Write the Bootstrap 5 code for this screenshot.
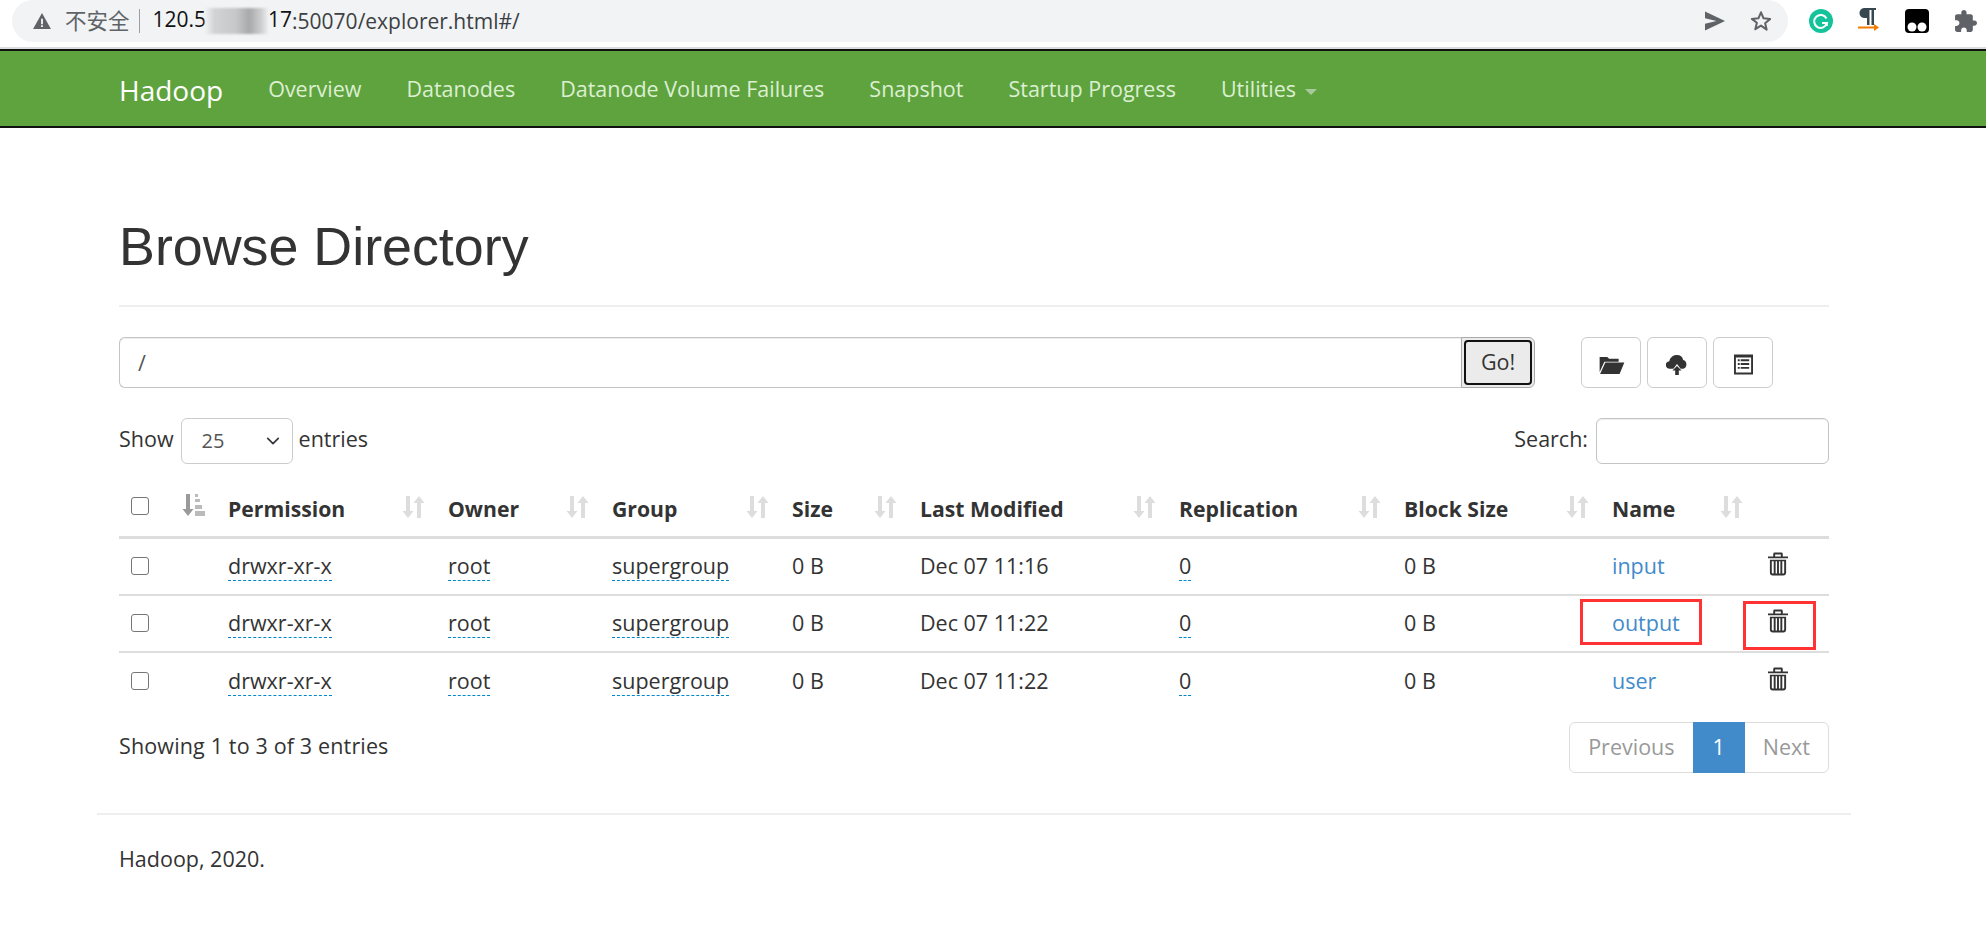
<!DOCTYPE html>
<html lang="zh-CN">
<head>
<meta charset="utf-8">
<title>Browsing HDFS</title>
<link rel="stylesheet" href="https://cdn.jsdelivr.net/npm/bootstrap@5.3.0/dist/css/bootstrap.min.css">
<style>
:root{--hd-blue:#428bca;--hd-border:#ccc;}
html,body{height:100%;}
body{font-family:"Open Sans","Noto Sans",sans-serif;font-size:21.5px;color:#333;background:#fff;overflow:hidden;}
.chrome-bar{height:49px;background:#fff;padding-left:12px;padding-right:9px;}
.omni{height:42px;width:1776px;flex-shrink:0;background:#f1f3f4;border-radius:21px;padding:0 16px 0 21px;font-size:21px;line-height:1;}
.omni-warn{color:#5f6368;font-family:"Noto Sans CJK SC",sans-serif;font-size:21.5px;padding-bottom:2px;}
.omni-sep{width:1px;height:24px;background:#9aa0a6;margin:0 13px 0 9px;}
.omni-host{color:#111;}
.omni-path{color:#3c4043;}
.blur-patch{display:inline-block;width:63px;height:26px;margin:0 0 0 -1px;vertical-align:middle;background:linear-gradient(90deg,#f1f2f3 0,#d2d3d5 15%,#c6c7c9 50%,#a8a9ab 70%,#cfd0d2 90%,#eeeff0 100%);filter:blur(1px);}
.omni-gap{margin-right:14px;}
.ext-strip{width:168px;flex-shrink:0;}
.hd-nav{height:79px;background:#5fa33e;border-top:2px solid #111;border-bottom:2px solid #111;box-shadow:0 -2px 0 #dadce0;padding:2px 119px 0;}
.hd-brand{font-size:28px;color:#fff;margin-right:22.5px;text-decoration:none;}
.hd-link{font-size:21.5px;color:#dcefd2;text-decoration:none;padding:0 22.5px;white-space:nowrap;}
.hd-caret{display:inline-block;border-top:6px solid #a9c99a;border-left:6px solid transparent;border-right:6px solid transparent;margin-left:9px;vertical-align:middle;}
.page-wrap{padding:0 157px 0 119px;}
.page-title{font-family:"Liberation Sans",Arial,sans-serif;font-size:53.800px;font-weight:400;color:#333;line-height:1.1;margin:0;padding-top:89px;height:179px;border-bottom:2px solid #eee;}
.path-row{margin-top:30px;height:51px;}
.path-group{width:1416px;}
.path-input{flex:1;height:51px;border:1px solid #c4c4c4;border-right:0;border-radius:6px 0 0 6px;padding:0 18px;font-size:21.5px;color:#555;box-shadow:inset 0 1px 1px rgba(0,0,0,.075);}
.go-btn{width:74px;height:51px;background:#ebebeb;border:1px solid #aaa;border-radius:0 6px 6px 0;padding:2px;color:#333;font-size:21.5px;}
.go-inner{display:flex;align-items:center;justify-content:center;height:100%;border:2px solid #111;border-radius:4px;}
.tool-btn{width:60px;height:51px;background:#fff;border:1px solid var(--hd-border);border-radius:6px;padding:0;margin-right:6px;color:#333;}
.tool-first{margin-left:46px;}
.filter-row{margin-top:30px;height:46px;}
.filter-label{padding-bottom:4px;}
.len-select{width:112px;height:46px;border:1px solid #ccc;border-radius:6px;color:#555;font-size:20px;padding:0 0 0 20px;margin:0 6px 0 7px;font-family:inherit;background-position:right 10px center;background-size:18px 14px;}
.search-input{width:233px;height:46px;border:1px solid #c4c4c4;border-radius:6px;margin-left:8px;box-shadow:inset 0 1px 1px rgba(0,0,0,.075);}
.hd-table{table-layout:fixed;width:1710px;border-collapse:collapse;margin:0;margin-top:12px;}
.hd-table th{height:61px;border-bottom:3px solid #ddd;padding:6px 0 0 11px;position:relative;font-weight:700;font-size:21.200px;vertical-align:middle;color:#333;}
.hd-table td{height:57.5px;border-bottom:2px solid #ddd;padding:0 0 0 11px;vertical-align:middle;}
.hd-table tbody tr:last-child td{border-bottom:0;}
.hd-table td.rel{position:relative;}
.hd-table th:first-child,.hd-table td:first-child{padding-left:12px;padding-top:0;}
.w-a{width:98px}.w-b{width:220px}.w-c{width:164px}.w-d{width:180px}.w-e{width:128px}.w-f{width:259px}.w-g{width:225px}.w-h{width:208px}.w-i{width:154px}.w-j{width:74px}
.hd-check{width:18px;height:18px;border:1.5px solid #767676;border-radius:3px;display:block;appearance:none;background:#fff;}
.sort-ico{position:absolute;right:12px;top:19px;width:23px;height:24px;color:#ddd;}
.sort-on{color:#9a9a9a;top:17px;}
.dotted{border-bottom:1px dashed #08c;text-decoration:none;color:#333;padding-bottom:0;}
.hd-link-blue{color:var(--hd-blue);text-decoration:none;}
.trash-ico{width:20px;height:24px;display:block;margin-left:2px;color:#333;margin-top:-5px;}
.red-a{position:absolute;border:3px solid #f33;left:-21px;top:3px;width:122px;height:46px;pointer-events:none;}
.red-b{position:absolute;border:3px solid #f33;left:-12px;top:5px;width:73px;height:49px;pointer-events:none;}
.info-row{margin-top:12px;height:51px;}
.info-text{padding-bottom:2px;letter-spacing:.15px;}
.hd-pager{display:flex;height:51px;border:1px solid #ddd;border-radius:6px;font-size:21.5px;}
.hd-pager span{display:flex;align-items:center;padding:0 18px;color:#999;}
.hd-pager .cur{background:var(--hd-blue);color:#fff;padding:0 20px;margin:-1px 0;}
.foot-rule{margin:40px -22px 0;border-top:2px solid #eee;}
.foot-text{margin-top:28px;}
</style>
</head>
<body>
<svg width="0" height="0" class="d-none">
<defs>
<symbol id="i-sort" viewBox="0 0 23 24"><path fill="currentColor" d="M4 1h4v15h3.500L6 23 .5 16H4zM17 1l5.500 7H19v15h-4V8h-3.500z"/></symbol>
<symbol id="i-sort-on" viewBox="0 0 23 24"><path fill="currentColor" d="M4 1h4v15h3.500L6 23 .5 16H4z"/><path fill="#bbb" d="M13 1h3v3h-3zM13 6h5v3h-5zM13 12h7v4h-7zM13 18h10v5H13z"/></symbol>
<symbol id="i-trash" viewBox="0 0 21 24"><path fill="currentColor" d="M7 0h7a1.500 1.500 0 0 1 1.500 1.500V4H21v2H0V4h5.500V1.500A1.500 1.500 0 0 1 7 0zm.500 2v2h6V2zM2 7.500h17V21a3 3 0 0 1-3 3H5a3 3 0 0 1-3-3zM4 9v12a1 1 0 0 0 1 1h1V9zm4 0v13h1.500V9zm3.500 0v13H13V9zM15 9v13h1a1 1 0 0 0 1-1V9z" fill-rule="evenodd"/></symbol>
</defs>
</svg>

<div class="chrome-bar d-flex align-items-start justify-content-between">
  <div class="omni d-flex align-items-center justify-content-between">
    <div class="d-flex align-items-center">
      <svg width="18" height="16" viewBox="0 0 19 17" class="omni-gap"><path fill="#5f6368" d="M9.500 0 19 17H0zM8.500 6v6h2V6zm0 7v2h2v-2z" fill-rule="evenodd"/></svg>
      <span class="omni-warn">不安全</span><span class="omni-sep"></span>
      <span class="omni-host">120.5<span class="blur-patch"></span>17</span><span class="omni-path">:50070/explorer.html#/</span>
    </div>
    <div class="d-flex align-items-center gap-4">
      <svg width="21" height="20" viewBox="0 0 22 20"><path fill="#5f6368" d="M0 0l21 10L0 20v-7l12-3L0 7z"/></svg>
      <svg width="22" height="22" viewBox="0 0 24 24"><path fill="none" stroke="#5f6368" stroke-width="2.200" stroke-linejoin="round" d="M12 2.500l2.800 6.600 7.200.6-5.500 4.700 1.700 7L12 17l-6.200 3.900 1.700-7L2 9.700l7.200-.6z"/></svg>
    </div>
  </div>
  <div class="ext-strip d-flex align-items-center justify-content-between pt-2">
    <svg width="24" height="24" viewBox="0 0 24 24"><circle cx="12" cy="12" r="12" fill="#15c39a"/><path fill="none" stroke="#fff" stroke-width="2" d="M17.500 9.500a6.500 6.500 0 1 0 .5 4.500h-5"/><path fill="#fff" d="M19 17l-4-.5 3.500-3z"/></svg>
    <svg width="22" height="26" viewBox="0 0 22 26"><path fill="#37474f" d="M6 0h12v2h-2v15h-2.500V2h-2v15H9V10H7a5 5 0 0 1-1-10z"/><path fill="#f57c00" d="M0 18.500h16V16l5 3.500-5 3.500v-2.500H0z"/></svg>
    <svg width="24" height="24" viewBox="0 0 24 24"><rect width="24" height="24" rx="4" fill="#000"/><circle cx="7" cy="18" r="4.500" fill="#fff"/><circle cx="17" cy="18" r="4.500" fill="#fff"/></svg>
    <svg width="23" height="23" viewBox="1 1 22 22"><path fill="#5f6368" d="M20.500 11H19V7c0-1.100-.9-2-2-2h-4V3.500C13 2.120 11.880 1 10.500 1S8 2.120 8 3.500V5H4c-1.100 0-1.990.9-1.990 2v3.800H3.500c1.490 0 2.700 1.210 2.700 2.700s-1.210 2.700-2.700 2.700H2V20c0 1.100.9 2 2 2h3.800v-1.500c0-1.490 1.210-2.700 2.700-2.700 1.490 0 2.700 1.210 2.700 2.700V22H17c1.100 0 2-.9 2-2v-4h1.500c1.380 0 2.500-1.120 2.500-2.500S21.880 11 20.500 11z"/></svg>
  </div>
</div>

<nav class="hd-nav d-flex align-items-center">
  <a class="hd-brand" href="#">Hadoop</a>
  <a class="hd-link" href="#">Overview</a>
  <a class="hd-link" href="#">Datanodes</a>
  <a class="hd-link" href="#">Datanode Volume Failures</a>
  <a class="hd-link" href="#">Snapshot</a>
  <a class="hd-link" href="#">Startup Progress</a>
  <a class="hd-link" href="#">Utilities<span class="hd-caret"></span></a>
</nav>

<main class="page-wrap">
  <h1 class="page-title">Browse Directory</h1>

  <div class="path-row d-flex">
    <div class="path-group d-flex">
      <input class="path-input" value="/" aria-label="path">
      <button class="go-btn" type="button"><span class="go-inner">Go!</span></button>
    </div>
    <button class="tool-btn tool-first" type="button" aria-label="Create directory">
      <svg width="27" height="19" viewBox="0 0 27 20"><path fill="#333" d="M1 2h8l2 2h10v3H6L1 18zM7 8h20l-5 12H1.500z"/></svg>
    </button>
    <button class="tool-btn" type="button" aria-label="Upload">
      <svg width="22" height="20" viewBox="0 0 24 22"><path fill="#333" d="M12 0a7 7 0 0 1 6.800 5.500A5 5 0 0 1 19 15h-3l-4-5-4 5H4a4 4 0 0 1-.5-8A8 8 0 0 1 12 0zM12 12l5 5h-3v5h-4v-5H7z"/></svg>
    </button>
    <button class="tool-btn" type="button" aria-label="Cut/Copy">
      <svg width="19" height="21" viewBox="0 0 20 21"><path fill="#333" fill-rule="evenodd" d="M0 0h20v21H0zM2 3v16h16V3zM4 5h2v2H4zM7 5h9v2H7zM4 9h2v2H4zM7 9h9v2H7zM4 13h2v2H4zM7 13h9v2H7z"/></svg>
    </button>
  </div>

  <div class="filter-row d-flex justify-content-between align-items-center">
    <div class="d-flex align-items-center"><span class="filter-label">Show</span>
      <select class="form-select len-select" aria-label="entries"><option>25</option></select>
      <span class="filter-label">entries</span></div>
    <div class="d-flex align-items-center"><span class="filter-label">Search:</span><input class="search-input" aria-label="search"></div>
  </div>

  <table class="hd-table">
    <colgroup><col class="w-a"><col class="w-b"><col class="w-c"><col class="w-d"><col class="w-e"><col class="w-f"><col class="w-g"><col class="w-h"><col class="w-i"><col class="w-j"></colgroup>
    <thead>
      <tr>
        <th><input type="checkbox" class="hd-check" aria-label="all"><svg class="sort-ico sort-on"><use href="#i-sort-on"/></svg></th>
        <th>Permission<svg class="sort-ico"><use href="#i-sort"/></svg></th>
        <th>Owner<svg class="sort-ico"><use href="#i-sort"/></svg></th>
        <th>Group<svg class="sort-ico"><use href="#i-sort"/></svg></th>
        <th>Size<svg class="sort-ico"><use href="#i-sort"/></svg></th>
        <th>Last Modified<svg class="sort-ico"><use href="#i-sort"/></svg></th>
        <th>Replication<svg class="sort-ico"><use href="#i-sort"/></svg></th>
        <th>Block Size<svg class="sort-ico"><use href="#i-sort"/></svg></th>
        <th>Name<svg class="sort-ico"><use href="#i-sort"/></svg></th>
        <th></th>
      </tr>
    </thead>
    <tbody>
      <tr>
        <td><input type="checkbox" class="hd-check" aria-label="input"></td>
        <td><a class="dotted" href="#">drwxr-xr-x</a></td><td><a class="dotted" href="#">root</a></td><td><a class="dotted" href="#">supergroup</a></td>
        <td>0 B</td><td>Dec 07 11:16</td><td><a class="dotted" href="#">0</a></td><td>0 B</td>
        <td><a class="hd-link-blue" href="#">input</a></td>
        <td><svg class="trash-ico"><use href="#i-trash"/></svg></td>
      </tr>
      <tr>
        <td><input type="checkbox" class="hd-check" aria-label="output"></td>
        <td><a class="dotted" href="#">drwxr-xr-x</a></td><td><a class="dotted" href="#">root</a></td><td><a class="dotted" href="#">supergroup</a></td>
        <td>0 B</td><td>Dec 07 11:22</td><td><a class="dotted" href="#">0</a></td><td>0 B</td>
        <td class="rel"><a class="hd-link-blue" href="#">output</a><span class="red-a"></span></td>
        <td class="rel"><svg class="trash-ico"><use href="#i-trash"/></svg><span class="red-b"></span></td>
      </tr>
      <tr>
        <td><input type="checkbox" class="hd-check" aria-label="user"></td>
        <td><a class="dotted" href="#">drwxr-xr-x</a></td><td><a class="dotted" href="#">root</a></td><td><a class="dotted" href="#">supergroup</a></td>
        <td>0 B</td><td>Dec 07 11:22</td><td><a class="dotted" href="#">0</a></td><td>0 B</td>
        <td><a class="hd-link-blue" href="#">user</a></td>
        <td><svg class="trash-ico"><use href="#i-trash"/></svg></td>
      </tr>
    </tbody>
  </table>

  <div class="info-row d-flex justify-content-between align-items-center">
    <div class="info-text">Showing 1 to 3 of 3 entries</div>
    <div class="hd-pager"><span>Previous</span><span class="cur">1</span><span>Next</span></div>
  </div>

  <div class="foot-rule"></div>
  <div class="foot-text">Hadoop, 2020.</div>
</main>
<script src="https://cdn.jsdelivr.net/npm/bootstrap@5.3.0/dist/js/bootstrap.bundle.min.js"></script>
</body>
</html>
